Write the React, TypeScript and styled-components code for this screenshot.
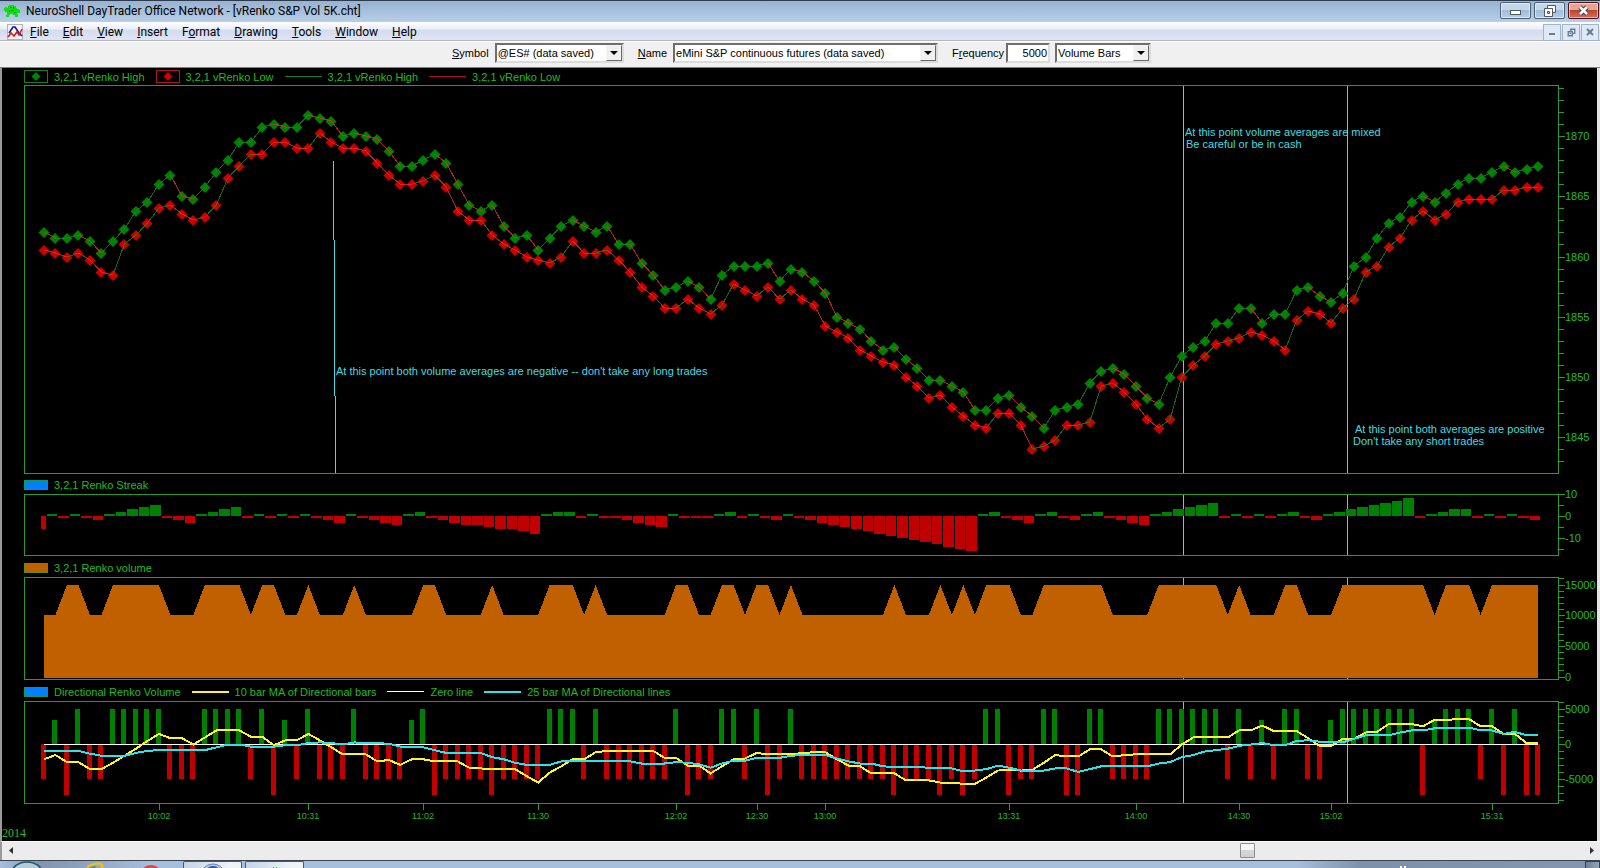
import React, { useEffect, useRef, useState } from "react";
import styled, { createGlobalStyle, css } from "styled-components";

const GlobalStyle = createGlobalStyle`
  *, *::before, *::after { box-sizing: border-box; }
  body { margin: 0; background: #a6bfdc; overflow-x: hidden; }
  button, input, select { font: inherit; color: inherit; margin: 0; padding: 0; border-radius: 0; }
`;

const UI_FONT = 'Roboto, "Noto Sans", sans-serif';
const CHART_FONT = '"Liberation Sans", Arial, sans-serif';

const FRAME = "#2a9a2a";
const LABEL = "#20bc20";
const GREEN = "#008000";
const RED = "#c00000";
const CYAN = "#40dce0";

/* ---------- data ---------- */

// Quarter points below 1870, one value per Renko bar.
const HIGH = [
  32, 34, 34, 33, 35, 39, 35, 31, 25, 22, 16, 13, 20, 21, 17, 12, 8, 2, 2, -3, -4, -3, -3, -7, -6, -5, 0, -1, 0, 1,
  5, 10, 10, 8, 6, 9, 16, 23, 25, 23, 30, 34, 33, 38, 34, 30, 28, 30, 32, 30, 36, 36, 42, 46, 51, 50, 48, 50, 54, 46,
  43, 43, 43, 42, 48, 44, 45, 48, 52, 60, 62, 64, 68, 71, 70, 74, 77, 81, 81, 83, 85, 91, 91, 87, 86, 90, 93, 97, 91,
  90, 89, 82, 78, 77, 79, 83, 87, 89, 80, 73, 70, 68, 62, 62, 57, 57, 62, 59, 59, 51, 50, 53, 55, 52, 43, 40, 34, 29,
  27, 22, 20, 22, 19, 16, 14, 14, 12, 10, 12, 11, 10,
];

const LOW = [
  38, 39, 40, 39, 41, 45, 46, 36, 33, 29, 24, 23, 26, 28, 27, 23, 14, 10, 6, 6, 2, 2, 4, 4, -1, 2, 4, 4, 5, 9, 13,
  16, 16, 15, 13, 17, 25, 28, 28, 33, 36, 38, 40, 41, 42, 40, 35, 39, 39, 38, 41, 45, 50, 53, 57, 57, 54, 57, 59, 56,
  49, 51, 53, 50, 54, 51, 54, 56, 63, 65, 67, 71, 73, 75, 76, 80, 83, 87, 86, 90, 93, 96, 97, 92, 92, 96, 104, 103,
  101, 96, 96, 95, 83, 82, 85, 89, 94, 97, 94, 80, 76, 73, 69, 68, 67, 65, 66, 68, 71, 61, 58, 59, 62, 57, 54, 45, 43,
  37, 34, 28, 25, 28, 26, 22, 21, 21, 21, 18, 18, 17, 17,
];

const STREAK = [
  -6, 1, -1, 1, -1, -2, 1, 2, 3, 4, 5, -1, -2, -3, 1, 2, 3, 4, -1, 1, -1, 1, -1, 1, -1, -2, -3, 1, -1, -2, -3, -4, 1,
  2, -1, -2, -3, -4, -4, -5, -6, -6, -7, -8, 1, 2, 2, -1, 1, -1, -1, -2, -3, -4, -5, 1, -1, -1, -1, 1, 2, -1, 1, -1,
  -2, 1, -1, -2, -3, -4, -5, -6, -7, -8, -9, -10, -11, -12, -13, -14, -15, -16, 1, 2, -1, -2, -3, 1, 2, -1, -2, 1, 2,
  -1, -2, -3, -4, 1, 2, 3, 4, 5, 6, -1, 1, -1, 1, -1, 1, 2, -1, -2, 1, 2, 3, 4, 5, 6, 7, 8, -1, 1, 2, 3, 3, -1, 1,
  -1, 1, -1, -2,
];

// Index ranges in which the volume stands at 15000; it is 10000 elsewhere.
const HIGH_VOLUME: [number, number][] = [
  [2, 3], [6, 10], [14, 17], [19, 20], [23, 23], [27, 27], [33, 34], [39, 39], [44, 46], [48, 48], [55, 56], [59, 60],
  [62, 63], [65, 65], [74, 74], [78, 78], [80, 80], [82, 84], [87, 92], [97, 102], [104, 104], [108, 109], [113, 120],
  [122, 124], [126, 130],
];

const DEEP_BARS = [2, 20, 34, 39, 56, 63, 74, 78, 80, 84, 89, 90, 120, 127, 129, 130];
const SHORT_BARS = [1, 21, 32, 106, 112, 121];

// Moving averages, in hundreds of contracts.
const MA10 = [
  -21, -15, -25, -25, -35, -35, -26, -16, -6, 5, 15, 9, 9, 0, 10, 20, 20, 20, 11, 11, -1, 6, 6, 15, 6, -4, -14, -14,
  -14, -24, -22, -29, -21, -21, -24, -24, -24, -33, -34, -35, -35, -35, -45, -54, -40, -31, -21, -21, -11, -9, -9, -9,
  -9, -9, -19, -19, -30, -30, -41, -31, -21, -20, -12, -14, -14, -14, -12, -11, -11, -21, -30, -31, -41, -41, -41, -51,
  -51, -51, -54, -54, -56, -56, -47, -37, -36, -37, -36, -26, -15, -17, -17, -7, -7, -17, -15, -14, -14, -14, -14, 0,
  10, 10, 10, 10, 20, 20, 27, 19, 19, 19, 9, -2, -2, 8, 8, 17, 18, 29, 29, 29, 26, 35, 35, 36, 36, 26, 26, 15, 15, 2,
  2,
];

const MA25 = [
  -9, -9, -9, -9, -13, -16, -16, -16, -12, -9, -8, -8, -8, -8, -8, -4, 0, 0, -3, -3, -3, -1, -1, 2, 3, 2, 0, 3, 2, 2,
  1, -3, -4, -4, -8, -12, -12, -12, -12, -18, -21, -26, -29, -29, -29, -24, -24, -24, -24, -24, -24, -24, -27, -27,
  -27, -25, -26, -28, -33, -27, -23, -23, -19, -19, -19, -16, -15, -15, -15, -20, -24, -27, -27, -31, -32, -32, -32,
  -33, -33, -34, -38, -37, -35, -30, -33, -37, -37, -37, -34, -34, -39, -35, -31, -31, -31, -31, -31, -27, -25, -18,
  -15, -10, -8, -6, -2, 0, 2, -1, -1, 5, 6, 4, 3, 3, 8, 13, 13, 13, 17, 20, 20, 23, 24, 24, 24, 20, 20, 15, 18, 13, 13,
];

const TIMES: [number, string][] = [
  [10, "10:02"], [23, "10:31"], [33, "11:02"], [43, "11:30"], [55, "12:02"], [62, "12:30"], [68, "13:00"],
  [84, "13:31"], [95, "14:00"], [104, "14:30"], [112, "15:02"], [126, "15:31"],
];

const COUNT = STREAK.length;
const MARKERS = [99.1, 113.4];

/* ---------- window chrome ---------- */

const Desktop = styled.div`
  min-height: 100vh;
  display: flex;
  flex-direction: column;
  font-family: ${UI_FONT};
`;

const TitleBar = styled.header`
  height: 22px;
  display: flex;
  align-items: center;
  padding: 0 1px 2px 4px;
  border-top: 1px solid #2b3a4c;
  background: linear-gradient(#98b2d0, #a6c0dd 50%, #b8cee8);
`;

const Title = styled.h1`
  margin: 0;
  flex: 1;
  padding: 1px 0 0 6px;
  font-size: 12px;
  line-height: 18px;
  font-weight: 400;
  color: #000;
  white-space: nowrap;
`;

const ButtonGroup = styled.div<{ $gap: number }>`
  display: flex;
  gap: ${(p) => p.$gap}px;
`;

const CaptionButton = styled.button<{ $close?: boolean }>`
  width: 31px;
  height: 17px;
  display: flex;
  align-items: center;
  justify-content: center;
  border: 1px solid #4c6078;
  border-radius: 2px;
  box-shadow: inset 0 0 0 1px rgba(255, 255, 255, 0.5);
  background: linear-gradient(#c6d7ea 45%, #a4bcd8 50%, #b8cde4);
  ${(p) =>
    p.$close &&
    css`
      border-color: #4a1420;
      background: linear-gradient(#e5a596 45%, #c04530 50%, #d2705a);
    `}
`;

const MenuBar = styled.nav`
  height: 19px;
  display: flex;
  align-items: center;
  padding: 2px 1px 0 7px;
  border-bottom: 1px solid #b4b6be;
  background: linear-gradient(#ffffff, #e8edf7 40%, #d3dbed 45%, #e0e5f6);
`;

const MenuItems = styled.div`
  flex: 1;
  display: flex;
  gap: 14px;
  padding-left: 7px;
`;

const MenuItem = styled.button`
  border: 0;
  background: none;
  font-size: 12px;
  line-height: 16px;
  color: #000;
`;

const ChildButton = styled.button`
  width: 18px;
  height: 17px;
  display: flex;
  align-items: center;
  justify-content: center;
  border: 1px solid #9fb4c8;
  background: #dfe9f6;
`;

const ToolBar = styled.form`
  height: 27px;
  display: flex;
  align-items: center;
  justify-content: flex-start;
  padding: 0 0 3px 28.25%;
  border-top: 1px solid #fff;
  border-bottom: 1px solid #808080;
  background: #f0f0f0;
  font-family: ${CHART_FONT};
  font-size: 11px;
  color: #000;
`;

const FieldLabel = styled.label<{ $gap: number }>`
  margin-right: ${(p) => p.$gap}px;
  padding-bottom: 1px;
  line-height: 16px;
`;

const sunken = css`
  height: 20px;
  border: 2px solid;
  border-color: #6e6e6e #dcdcdc #dcdcdc #6e6e6e;
  background: #fff;
`;

const SelectBox = styled.span<{ $width: number; $gap: number }>`
  ${sunken}
  width: ${(p) => p.$width}px;
  margin-right: ${(p) => p.$gap}px;
  display: flex;
`;

const Select = styled.select`
  flex: 1;
  min-width: 0;
  padding-left: 1px;
  border: 0;
  background: none;
  appearance: none;
  outline: none;
`;

const DropArrow = styled.span`
  width: 16px;
  display: flex;
  align-items: center;
  justify-content: center;
  border: 1px solid;
  border-color: #f4f4f4 #696969 #696969 #f4f4f4;
  background: #f0f0f0;
  pointer-events: none;
`;

const NumberInput = styled.input`
  ${sunken}
  width: 44px;
  margin-right: 5px;
  padding-right: 1px;
  text-align: right;
`;

/* ---------- chart ---------- */

const ChartArea = styled.main`
  display: flex;
  flex-direction: column;
  border-left: 2px solid #9a9a9a;
  border-right: 3px solid #e4e4e4;
  background: #000;
  font-family: ${CHART_FONT};
  font-size: 11px;
  color: ${LABEL};
`;

const Legend = styled.div<{ $height: number; $top?: number }>`
  height: ${(p) => p.$height}px;
  display: flex;
  align-items: center;
  gap: 11px;
  padding: ${(p) => p.$top ?? 2}px 0 0 22px;
  line-height: 14px;
`;

const LegendEntry = styled.span`
  display: flex;
  align-items: center;
  gap: 6px;
  white-space: nowrap;
`;

const Swatch = styled.i<{ $fill: string; $edge: string }>`
  width: 24px;
  height: 10px;
  border: 1px solid ${(p) => p.$edge};
  background: ${(p) => p.$fill};
`;

const LineKey = styled.i<{ $color: string; $thick?: boolean }>`
  width: 37px;
  height: ${(p) => (p.$thick ? 2 : 1)}px;
  background: ${(p) => p.$color};
`;

const Plot = styled.svg`
  display: block;
  width: 100%;
  overflow: visible;
`;

const AxisRow = styled.footer`
  height: 37px;
  display: flex;
  flex-direction: column;
  justify-content: space-between;
`;

const Year = styled.span`
  font-family: "Liberation Serif", "Times New Roman", serif;
  font-size: 12px;
  line-height: 15px;
`;

function DiamondKey({ color, edge }: { color: string; edge: string }) {
  return (
    <svg width="24" height="13" aria-hidden="true">
      <rect x="0.5" y="0.5" width="23" height="12" fill="none" stroke={edge} />
      <path d="M12 2L16.500 6.500L12 11L7.500 6.500Z" fill={color} />
    </svg>
  );
}

type Scale = { width: number; right: number; x: (i: number) => number };

function makeScale(width: number): Scale {
  const right = width - 39;
  return { width, right, x: (i) => 42 + (i * (right - 62)) / (COUNT - 1) };
}

type PanelProps = {
  scale: Scale;
  height: number;
  y: (v: number) => number;
  from: number;
  to: number;
  minor: number;
  major: number;
  label: string;
  children: React.ReactNode;
};

function Panel({ scale, height, y, from, to, minor, major, label, children }: PanelProps) {
  const ticks: number[] = [];
  for (let v = from; v <= to; v += minor) ticks.push(v);
  const { right } = scale;
  return (
    <Plot height={height} role="img" aria-label={label}>
      {MARKERS.map((m) => (
        <rect key={m} x={Math.round(scale.x(m))} y={1} width={1} height={height - 2} fill={CYAN} />
      ))}
      {children}
      <rect x={22.5} y={0.5} width={right - 22} height={height - 1} fill="none" stroke={FRAME} />
      {ticks.map((v) => {
        const big = v % major === 0;
        return (
          <g key={v}>
            <rect x={right + 1} y={Math.round(y(v))} width={big ? 6 : 5} height={1} fill={FRAME} />
            {big && (
              <text x={right + 7} y={Math.round(y(v)) + 4} fill={LABEL}>
                {v}
              </text>
            )}
          </g>
        );
      })}
    </Plot>
  );
}

function PricePanel({ scale }: { scale: Scale }) {
  const y = (p: number) => 51 + (1870 - p) * 12.05;
  const yq = (q: number) => Math.round(51 + q * 3.0125);
  const segments = (values: number[], low: boolean) =>
    values.slice(1).map((q, k) => {
      const prev = values[k];
      const down = low ? q >= prev : q > prev;
      return (
        <line
          key={k}
          x1={scale.x(k)}
          y1={yq(prev)}
          x2={scale.x(k + 1)}
          y2={yq(q)}
          stroke={down ? "#e03020" : "#208020"}
          strokeOpacity={0.8}
        />
      );
    });
  const diamonds = (values: number[], fill: string) =>
    values.map((q, k) => {
      const cx = Math.round(scale.x(k));
      const cy = yq(q);
      return <path key={k} d={`M${cx} ${cy - 5}l5.500 5.500l-5.500 5.500l-5.500 -5.500z`} fill={fill} />;
    });
  const m0 = Math.round(scale.x(25.15));
  const m1 = Math.round(scale.x(MARKERS[0]));
  const m2 = Math.round(scale.x(MARKERS[1]));
  return (
    <Panel scale={scale} height={389} y={y} from={1843} to={1874} minor={1} major={5} label="vRenko high and low prices">
      {diamonds(HIGH, GREEN)}
      {diamonds(LOW, "#c80000")}
      <g shapeRendering="crispEdges">
        {segments(HIGH, false)}
        {segments(LOW, true)}
      </g>
      <g fill={CYAN}>
        <rect x={m0} y={76} width={1} height={79} />
        <rect x={m0 + 1} y={155} width={1} height={156} />
        <rect x={m0 + 2} y={311} width={1} height={77} />
        <text x={m0 + 3} y={290}>At this point both volume averages are negative -- don't take any long trades</text>
        <text x={m1 + 2} y={51}>At this point volume averages are mixed</text>
        <text x={m1 + 3} y={63}>Be careful or be in cash</text>
        <text x={m2 + 8} y={348}>At this point both averages are positive</text>
        <text x={m2 + 6} y={360}>Don't take any short trades</text>
      </g>
    </Panel>
  );
}

function StreakPanel({ scale }: { scale: Scale }) {
  const y = (v: number) => 22 - v * 2.19;
  return (
    <Panel scale={scale} height={62} y={y} from={-15} to={10} minor={5} major={10} label="Renko streak">
      {STREAK.map((v, i) => {
        const end = Math.round(scale.x(i) + 2);
        const start = i === 0 ? end - 5 : Math.round(scale.x(i - 1) + 2) + 1;
        const size = Math.max(2, Math.round(Math.abs(v) * 2.19));
        return (
          <rect key={i} x={start} y={v > 0 ? 22 - size : 22} width={end - start} height={size} fill={v > 0 ? GREEN : RED} />
        );
      })}
    </Panel>
  );
}

function VolumePanel({ scale }: { scale: Scale }) {
  const y = (v: number) => Math.floor(100 - (v * 92) / 15000);
  const isHigh = (i: number) => HIGH_VOLUME.some(([a, b]) => i >= a && i <= b);
  const points = STREAK.map((_, i) => `${scale.x(i)},${y(isHigh(i) ? 15000 : 10000)}`);
  return (
    <Panel scale={scale} height={103} y={y} from={0} to={16000} minor={1000} major={5000} label="Renko volume">
      <polygon
        points={`${scale.x(0)},101 ${points.join(" ")} ${scale.x(COUNT - 1)},101`}
        fill="#c06000"
        shapeRendering="crispEdges"
      />
    </Panel>
  );
}

function DirectionalPanel({ scale }: { scale: Scale }) {
  const y = (v: number) => 43 - v * 0.00704;
  const curve = (values: number[]) => values.map((v, i) => `${scale.x(i)},${y(v * 100) + 0.5}`).join(" ");
  return (
    <Panel
      scale={scale}
      height={103}
      y={y}
      from={-8000}
      to={6000}
      minor={1000}
      major={5000}
      label="Directional Renko volume"
    >
      {STREAK.map((v, i) => {
        const size = v > 0 ? (SHORT_BARS.includes(i) ? 24 : 35) : DEEP_BARS.includes(i) ? 51 : 35;
        return (
          <rect
            key={i}
            x={Math.round(scale.x(i) - 3)}
            y={v > 0 ? 43 - size : 43}
            width={5}
            height={size}
            fill={v > 0 ? GREEN : RED}
          />
        );
      })}
      <rect x={scale.x(0)} y={43} width={scale.x(COUNT - 1) - scale.x(0)} height={1} fill="#fff" />
      <g fill="none" strokeWidth={2} shapeRendering="crispEdges">
        <polyline points={curve(MA10)} stroke="#fcf42c" />
        <polyline points={curve(MA25)} stroke="#2ce4e8" />
      </g>
    </Panel>
  );
}

function TimeAxis({ scale }: { scale: Scale }) {
  return (
    <AxisRow>
      <Plot height={20} role="img" aria-label="Time">
        {TIMES.map(([i, text]) => (
          <g key={text} fill={LABEL}>
            <rect x={Math.round(scale.x(i))} y={0} width={1} height={6} fill={FRAME} />
            <text x={Math.round(scale.x(i))} y={15} fontSize={9} textAnchor="middle">
              {text}
            </text>
          </g>
        ))}
      </Plot>
      <Year>2014</Year>
    </AxisRow>
  );
}

/* ---------- scroll bar and task bar ---------- */

const ScrollRow = styled.div`
  height: 19px;
  display: flex;
  align-items: center;
  padding-bottom: 2px;
  border: solid #9a9a9a;
  border-width: 0 0 0 2px;
  border-top: 1px solid #fafafa;
  background: #ececec;
`;

const ScrollButton = styled.button`
  width: 17px;
  height: 16px;
  display: flex;
  align-items: center;
  justify-content: center;
  border: 0;
  background: none;
`;

const ScrollRange = styled.input`
  flex: 1;
  min-width: 0;
  height: 15px;
  appearance: none;
  background: none;
  &::-webkit-slider-thumb {
    appearance: none;
    width: 15px;
    height: 15px;
    border: 1px solid #8e8e8e;
    border-radius: 1px;
    background: linear-gradient(#f6f6f6 45%, #d8d8d8 50%, #cfcfd2);
  }
`;

const TaskBar = styled.footer`
  flex: 1;
  min-height: 8px;
  height: 8px;
  display: flex;
  align-items: flex-start;
  border-top: 1px solid #3a4450;
  background: linear-gradient(
    90deg, #a6bfdc 0, #8195b0 40px, #8ba0bb 80px, #a6bfdc 150px, #a6bfdc 81%, #7d91ab 85%, #8496b0
  );
  overflow: hidden;
`;

const TaskIcons = styled.svg`
  flex: 0 0 183px;
  height: 7px;
`;

const TaskButton = styled.button`
  width: 59px;
  height: 30px;
  margin-right: 3px;
  display: flex;
  align-items: flex-start;
  justify-content: center;
  border: 1px solid #4a5868;
  border-bottom: 0;
  border-radius: 2px 2px 0 0;
  background: linear-gradient(90deg, #c4d3e6, #eef3f8 80%);
`;

const Tray = styled.span`
  flex: 1;
  display: flex;
  justify-content: flex-end;
  padding: 5px 179px 0 0;
`;

const ShowDesktop = styled.button`
  width: 15px;
  height: 30px;
  border: 1px solid #35414f;
  background: linear-gradient(90deg, #6f8096, #93a4b8);
`;

function RestoreGlyph({ color, fill, size }: { color: string; fill: string; size: number }) {
  return (
    <svg width={size} height={size} viewBox="0 0 11 11" aria-hidden="true">
      <path d="M4.500 1.500h5v5h-5z" fill={fill} stroke={color} strokeWidth="1.600" />
      <path d="M1.500 4.500h5v5h-5z" fill={fill} stroke={color} strokeWidth="1.600" />
      <path d="M3 6.500h2" stroke={color} strokeWidth="1.600" />
    </svg>
  );
}

const MENUS = ["File", "Edit", "View", "Insert", "Format", "Drawing", "Tools", "Window", "Help"];

export default function App() {
  const chartRef = useRef<HTMLElement>(null);
  const [width, setWidth] = useState(window.innerWidth - 5);

  useEffect(() => {
    const el = chartRef.current;
    if (!el) return;
    const observer = new ResizeObserver(() => setWidth(el.clientWidth));
    observer.observe(el);
    return () => observer.disconnect();
  }, []);

  const scale = makeScale(width);

  return (
    <Desktop>
      <GlobalStyle />
      <TitleBar>
        <svg width="16" height="14" viewBox="0 0 16 14" aria-hidden="true">
          <path
            d="M5 1h5v1h2v2h1v1h2v1h1v3h-3v1h1v3h-3v-2H9v-1H6v1H5v2H2v-2h1V8H1V7H0V4h1V3h2v1h1V2h1z"
            fill="#0ee010"
          />
          <path d="M6 3h2v1H6zM9 3h1v2H9zM7 6h3v1H7zM5 6h1v2H5zM10 8h2v1h-2z" fill="#0a9a10" />
        </svg>
        <Title>NeuroShell DayTrader Office Network - [vRenko S&amp;P Vol 5K.cht]</Title>
        <ButtonGroup $gap={3}>
          <CaptionButton aria-label="Minimize">
            <svg width="13" height="8" aria-hidden="true">
              <rect x="1.500" y="3.500" width="10" height="4" fill="#fff" stroke="#4f5a68" />
            </svg>
          </CaptionButton>
          <CaptionButton aria-label="Restore">
            <svg width="13" height="12" aria-hidden="true">
              <path d="M4.500 0.500h8v7h-8z" fill="#fff" stroke="#4f5a68" />
              <path d="M7.500 3.500h2v2h-2z" fill="#9fb4cc" stroke="#4f5a68" />
              <path d="M1.500 3.500h8v8h-8z" fill="#fff" stroke="#4f5a68" />
              <path d="M4.500 6.500h2v2h-2z" fill="#9fb4cc" stroke="#4f5a68" />
            </svg>
          </CaptionButton>
          <CaptionButton $close aria-label="Close">
            <svg width="13" height="11" aria-hidden="true">
              <path d="M3 2l7 7M10 2l-7 7" stroke="#5b3a40" strokeWidth="4.600" />
              <path d="M3 2l7 7M10 2l-7 7" stroke="#fff" strokeWidth="2.600" />
            </svg>
          </CaptionButton>
        </ButtonGroup>
      </TitleBar>

      <MenuBar>
        <svg width="16" height="16" viewBox="0 0 16 16" aria-hidden="true">
          <rect width="16" height="16" fill="#f4f4f8" />
          <path d="M0.500 0.500h15v15h-15z" fill="none" stroke="#707070" strokeDasharray="1 1" />
          <path d="M2 9L6 3L8 3L12 9L15 12" fill="none" stroke="#14149a" strokeWidth="1.600" />
          <path d="M1 13L4 9L7 12L10 8L12 11L15 5" fill="none" stroke="#e01818" strokeWidth="1.600" />
        </svg>
        <MenuItems>
          {MENUS.map((name) => {
            const at = name === "Format" ? 1 : 0;
            return (
              <MenuItem key={name}>
                {name.slice(0, at)}
                <u>{name[at]}</u>
                {name.slice(at + 1)}
              </MenuItem>
            );
          })}
        </MenuItems>
        <ButtonGroup $gap={1}>
          <ChildButton aria-label="Minimize chart">
            <svg width="8" height="8" aria-hidden="true">
              <path d="M1 6h6" stroke="#667a90" strokeWidth="2" />
            </svg>
          </ChildButton>
          <ChildButton aria-label="Restore chart">
            <RestoreGlyph size={9} color="#667a90" fill="#dfe9f6" />
          </ChildButton>
          <ChildButton aria-label="Close chart">
            <svg width="8" height="8" aria-hidden="true">
              <path d="M1 1l6 6M7 1l-6 6" stroke="#667a90" strokeWidth="2" />
            </svg>
          </ChildButton>
        </ButtonGroup>
      </MenuBar>

      <ToolBar onSubmit={(e) => e.preventDefault()}>
        <FieldLabel $gap={6} htmlFor="symbol"><u>S</u>ymbol</FieldLabel>
        <SelectBox $width={129} $gap={14}>
          <Select id="symbol"><option>@ES# (data saved)</option></Select>
          <DropArrow><svg width="8" height="4" aria-hidden="true"><path d="M0 0h8l-4 4z" /></svg></DropArrow>
        </SelectBox>
        <FieldLabel $gap={6} htmlFor="name"><u>N</u>ame</FieldLabel>
        <SelectBox $width={265} $gap={14}>
          <Select id="name"><option>eMini S&amp;P continuous futures (data saved)</option></Select>
          <DropArrow><svg width="8" height="4" aria-hidden="true"><path d="M0 0h8l-4 4z" /></svg></DropArrow>
        </SelectBox>
        <FieldLabel $gap={2} htmlFor="frequency">F<u>r</u>equency</FieldLabel>
        <NumberInput id="frequency" defaultValue="5000" />
        <SelectBox $width={96} $gap={0}>
          <Select aria-label="Bar type"><option>Volume Bars</option></Select>
          <DropArrow><svg width="8" height="4" aria-hidden="true"><path d="M0 0h8l-4 4z" /></svg></DropArrow>
        </SelectBox>
      </ToolBar>

      <ChartArea ref={chartRef}>
        <Legend $height={17} $top={0}>
          <LegendEntry><DiamondKey color={GREEN} edge="#1c7c1c" />3,2,1 vRenko High</LegendEntry>
          <LegendEntry><DiamondKey color="#c80000" edge="#b01818" />3,2,1 vRenko Low</LegendEntry>
          <LegendEntry><LineKey $color="#1c7c1c" />3,2,1 vRenko High</LegendEntry>
          <LegendEntry><LineKey $color="#b01010" />3,2,1 vRenko Low</LegendEntry>
        </Legend>
        <PricePanel scale={scale} />
        <Legend $height={20}>
          <LegendEntry><Swatch $fill="#0080ff" $edge="#109a60" />3,2,1 Renko Streak</LegendEntry>
        </Legend>
        <StreakPanel scale={scale} />
        <Legend $height={21}>
          <LegendEntry><Swatch $fill="#c06000" $edge="#5c8c10" />3,2,1 Renko volume</LegendEntry>
        </Legend>
        <VolumePanel scale={scale} />
        <Legend $height={21}>
          <LegendEntry><Swatch $fill="#0080ff" $edge="#109a60" />Directional Renko Volume</LegendEntry>
          <LegendEntry><LineKey $color="#fcf42c" $thick />10 bar MA of Directional bars</LegendEntry>
          <LegendEntry><LineKey $color="#fff" />Zero line</LegendEntry>
          <LegendEntry><LineKey $color="#2ce4e8" $thick />25 bar MA of Directional lines</LegendEntry>
        </Legend>
        <DirectionalPanel scale={scale} />
        <TimeAxis scale={scale} />
      </ChartArea>

      <ScrollRow>
        <ScrollButton aria-label="Scroll left">
          <svg width="4" height="7" aria-hidden="true"><path d="M4 0v7L0 3.500z" fill="#303030" /></svg>
        </ScrollButton>
        <ScrollRange type="range" min={0} max={10000} defaultValue={7885} aria-label="Chart position" />
        <ScrollButton aria-label="Scroll right">
          <svg width="4" height="7" aria-hidden="true"><path d="M0 0v7L4 3.500z" fill="#303030" /></svg>
        </ScrollButton>
      </ScrollRow>

      <TaskBar>
        <TaskIcons aria-hidden="true">
          <ellipse cx="27" cy="12" rx="15" ry="11" fill="#b4cbd8" stroke="#24506c" strokeWidth="1.500" />
          <path d="M84 9Q92 5 96 5L94 9z" fill="#3f86c8" />
          <path d="M87 6Q98 0 102 4Q103 6 101 8" fill="none" stroke="#e8c020" strokeWidth="2.500" />
          <ellipse cx="151" cy="11" rx="9" ry="7" fill="#d84a40" />
        </TaskIcons>
        <TaskButton aria-label="Browser">
          <svg width="24" height="8" aria-hidden="true">
            <ellipse cx="12" cy="11" rx="11" ry="9" fill="#b8c4d8" stroke="#7488a8" />
            <ellipse cx="12" cy="12" rx="8" ry="8" fill="#2858a8" />
          </svg>
        </TaskButton>
        <TaskButton aria-label="NeuroShell">
          <svg width="8" height="8" aria-hidden="true"><path d="M2 5h1v2h-1zM5 5h1v2h-1z" fill="#20c020" /></svg>
        </TaskButton>
        <Tray>
          <svg width="6" height="3" aria-hidden="true"><path d="M0 0h2v3h-2zM4 0h2v3h-2z" fill="#fff" /></svg>
        </Tray>
        <ShowDesktop aria-label="Show desktop" />
      </TaskBar>
    </Desktop>
  );
}
